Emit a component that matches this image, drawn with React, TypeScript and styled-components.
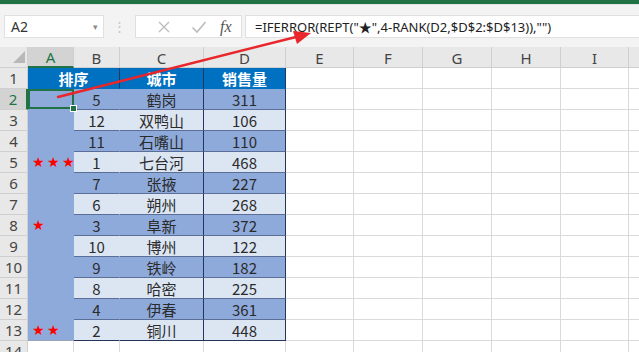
import React from "react";
import styled, { createGlobalStyle, css } from "styled-components";

const GlobalStyle = createGlobalStyle`
  html, body {
    margin: 0;
    padding: 0;
    background: #ffffff;
  }
  body {
    font-family: "Noto Sans", "Noto Sans CJK SC", sans-serif;
  }
`;

type Tone = "head" | "dark" | "light";

const rows = [
  { stars: "", rank: 5, city: "鹤岗", sales: 311 },
  { stars: "", rank: 12, city: "双鸭山", sales: 106 },
  { stars: "", rank: 11, city: "石嘴山", sales: 110 },
  { stars: "★★★", rank: 1, city: "七台河", sales: 468 },
  { stars: "", rank: 7, city: "张掖", sales: 227 },
  { stars: "", rank: 6, city: "朔州", sales: 268 },
  { stars: "★", rank: 3, city: "阜新", sales: 372 },
  { stars: "", rank: 10, city: "博州", sales: 122 },
  { stars: "", rank: 9, city: "铁岭", sales: 182 },
  { stars: "", rank: 8, city: "哈密", sales: 225 },
  { stars: "", rank: 4, city: "伊春", sales: 361 },
  { stars: "★★", rank: 2, city: "铜川", sales: 448 },
];

const columns = ["A", "B", "C", "D", "E", "F", "G", "H", "I", ""];
const emptyCols = 6;

const App = () => {
  return (
    <Page>
      <GlobalStyle />
      <TitleStrip />
      <Toolbar>
        <NameBox>
          <span>A2</span>
          <Caret>▾</Caret>
        </NameBox>
        <Grip>⋮</Grip>
        <FuncBox>
          <FuncIcon>
            <svg width="14" height="14" viewBox="0 0 14 14">
              <path d="M2 2 L12 12 M12 2 L2 12" stroke="#bdbdbd" strokeWidth="1.4" fill="none" />
            </svg>
          </FuncIcon>
          <FuncIcon>
            <svg width="16" height="14" viewBox="0 0 16 14">
              <path d="M1.5 7.5 L6 12 L14.5 2" stroke="#bdbdbd" strokeWidth="1.6" fill="none" />
            </svg>
          </FuncIcon>
          <FxLabel>fx</FxLabel>
        </FuncBox>
        <FormulaBox>=IFERROR(REPT("★",4-RANK(D2,$D$2:$D$13)),"")</FormulaBox>
      </Toolbar>

      <Sheet>
        <Corner>
          <svg width="28" height="20" viewBox="0 0 28 20">
            <polygon points="13,16 25,4 25,16" fill="#b8b8b8" />
          </svg>
        </Corner>
        {columns.map((c, i) => (
          <ColHead key={i} $active={c === "A"}>
            {c}
          </ColHead>
        ))}

        <RowHead>1</RowHead>
        <TableCell $tone="head" $span={2} $edge>
          排序
        </TableCell>
        <TableCell $tone="head" $edge>
          城市
        </TableCell>
        <TableCell $tone="head" $edge>
          销售量
        </TableCell>
        {Array.from({ length: emptyCols }).map((_, k) => (
          <Cell key={k} />
        ))}

        {rows.map((r, i) => {
          const tone: Tone = i % 2 === 0 ? "dark" : "light";
          const last = i === rows.length - 1;
          return (
            <React.Fragment key={i}>
              <RowHead $active={i === 0}>{i + 2}</RowHead>
              <StarCell $selected={i === 0} $last={last}>
                {r.stars}
              </StarCell>
              <TableCell $tone={tone} $line $last={last}>
                {r.rank}
              </TableCell>
              <TableCell $tone={tone} $line $edge $last={last}>
                {r.city}
              </TableCell>
              <TableCell $tone={tone} $line $edge $last={last}>
                {r.sales}
              </TableCell>
              {Array.from({ length: emptyCols }).map((_, k) => (
                <Cell key={k} />
              ))}
            </React.Fragment>
          );
        })}

        <RowHead>14</RowHead>
        {Array.from({ length: 10 }).map((_, k) => (
          <Cell key={k} />
        ))}
      </Sheet>

      <ArrowLayer width="639" height="352" viewBox="0 0 639 352">
        <line x1="58" y1="97" x2="296" y2="37" stroke="#e8262b" strokeWidth="2.4" strokeLinecap="round" />
        <polygon points="311,33 293,31 297,44" fill="#e8262b" />
      </ArrowLayer>
    </Page>
  );
};

const Page = styled.div`
  position: relative;
  width: 639px;
  height: 352px;
  overflow: hidden;
  background: #ffffff;
`;

const TitleStrip = styled.div`
  height: 4px;
  background: #217346;
  border-bottom: 1px solid #e3e3e3;
`;

const Toolbar = styled.div`
  display: flex;
  align-items: flex-start;
  height: 42px;
  box-sizing: border-box;
  padding: 10px 0 0 4px;
  background: #f3f3f3;
`;

const NameBox = styled.div`
  display: flex;
  align-items: center;
  justify-content: space-between;
  width: 100px;
  height: 23px;
  box-sizing: border-box;
  padding: 0 5px 0 6px;
  background: #ffffff;
  border: 1px solid #e0e0e0;
  font-size: 14px;
  color: #333333;
`;

const Caret = styled.span`
  font-size: 9px;
  color: #8a8a8a;
`;

const Grip = styled.div`
  width: 31px;
  height: 23px;
  line-height: 23px;
  text-align: center;
  font-size: 13px;
  color: #c4c4c4;
`;

const FuncBox = styled.div`
  display: flex;
  align-items: center;
  width: 107px;
  height: 23px;
  box-sizing: border-box;
  padding-left: 10px;
  background: #ffffff;
  border: 1px solid #e0e0e0;
`;

const FuncIcon = styled.span`
  display: flex;
  align-items: center;
  justify-content: center;
  width: 35px;
`;

const FxLabel = styled.span`
  margin-left: 4px;
  font-family: "Liberation Serif", "DejaVu Serif", serif;
  font-style: italic;
  font-size: 16px;
  color: #555555;
`;

const FormulaBox = styled.div`
  flex: 1;
  height: 23px;
  line-height: 22px;
  margin-left: 3px;
  padding-left: 9px;
  box-sizing: border-box;
  background: #ffffff;
  border: 1px solid #e0e0e0;
  border-right: none;
  font-size: 13px;
  color: #222222;
  white-space: nowrap;
`;

const Sheet = styled.div`
  display: grid;
  grid-template-columns: 28px 46px 46px 84px 82px 68px 69px 69px 69px 68px 20px;
  grid-template-rows: 21px;
  grid-auto-rows: 21px;
  font-size: 15px;
`;

const headBase = css`
  display: flex;
  align-items: center;
  justify-content: center;
  box-sizing: border-box;
  background: #e8e8e8;
  color: #444444;
  border-right: 1px solid #cfcfcf;
  border-bottom: 1px solid #cfcfcf;
`;

const Corner = styled.div`
  ${headBase}
  display: block;
`;

const ColHead = styled.div<{ $active?: boolean }>`
  ${headBase}
  padding-top: 1px;
  ${({ $active }) =>
    $active &&
    css`
      background: #d3d3d3;
      color: #217346;
      border-bottom: 2px solid #217346;
    `}
`;

const RowHead = styled.div<{ $active?: boolean }>`
  ${headBase}
  ${({ $active }) =>
    $active &&
    css`
      background: #d3d3d3;
      color: #217346;
      border-right: 2px solid #217346;
    `}
`;

const Cell = styled.div`
  box-sizing: border-box;
  border-right: 1px solid #dadada;
  border-bottom: 1px solid #dadada;
  background: #ffffff;
`;

const toneColors: Record<Tone, string> = {
  head: "#0070c0",
  dark: "#8eaadb",
  light: "#dce6f3",
};

const TableCell = styled.div<{
  $tone: Tone;
  $span?: number;
  $edge?: boolean;
  $line?: boolean;
  $last?: boolean;
}>`
  display: flex;
  align-items: center;
  justify-content: center;
  box-sizing: border-box;
  grid-column: span ${({ $span }) => $span || 1};
  background: ${({ $tone }) => toneColors[$tone]};
  color: ${({ $tone }) => ($tone === "head" ? "#ffffff" : "#2b2b2b")};
  font-family: "Noto Sans CJK SC", "Noto Sans", sans-serif;
  font-weight: ${({ $tone }) => ($tone === "head" ? 700 : 400)};
  font-size: 15px;
  border-right: 1px solid ${({ $edge }) => ($edge ? "#26365a" : "transparent")};
  border-bottom: 1px solid
    ${({ $line, $last }) => ($last ? "#26365a" : $line ? "#5b6e98" : "#0070c0")};
`;

const StarCell = styled.div<{ $selected?: boolean; $last?: boolean }>`
  position: relative;
  display: flex;
  align-items: center;
  box-sizing: border-box;
  padding-left: 4px;
  background: #8eaadb;
  color: #ff0000;
  font-family: "DejaVu Sans", sans-serif;
  font-size: 14px;
  letter-spacing: 2.5px;
  border-bottom: 1px solid ${({ $last }) => ($last ? "#9aa4b8" : "#8eaadb")};
  ${({ $selected }) =>
    $selected &&
    css`
      box-shadow: inset 0 0 0 2px #217346;
      &::after {
        content: "";
        position: absolute;
        right: -3px;
        bottom: -3px;
        width: 5px;
        height: 5px;
        background: #217346;
        border: 1px solid #ffffff;
        z-index: 2;
      }
    `}
`;

const ArrowLayer = styled.svg`
  position: absolute;
  left: 0;
  top: 0;
  pointer-events: none;
`;

export default App;
